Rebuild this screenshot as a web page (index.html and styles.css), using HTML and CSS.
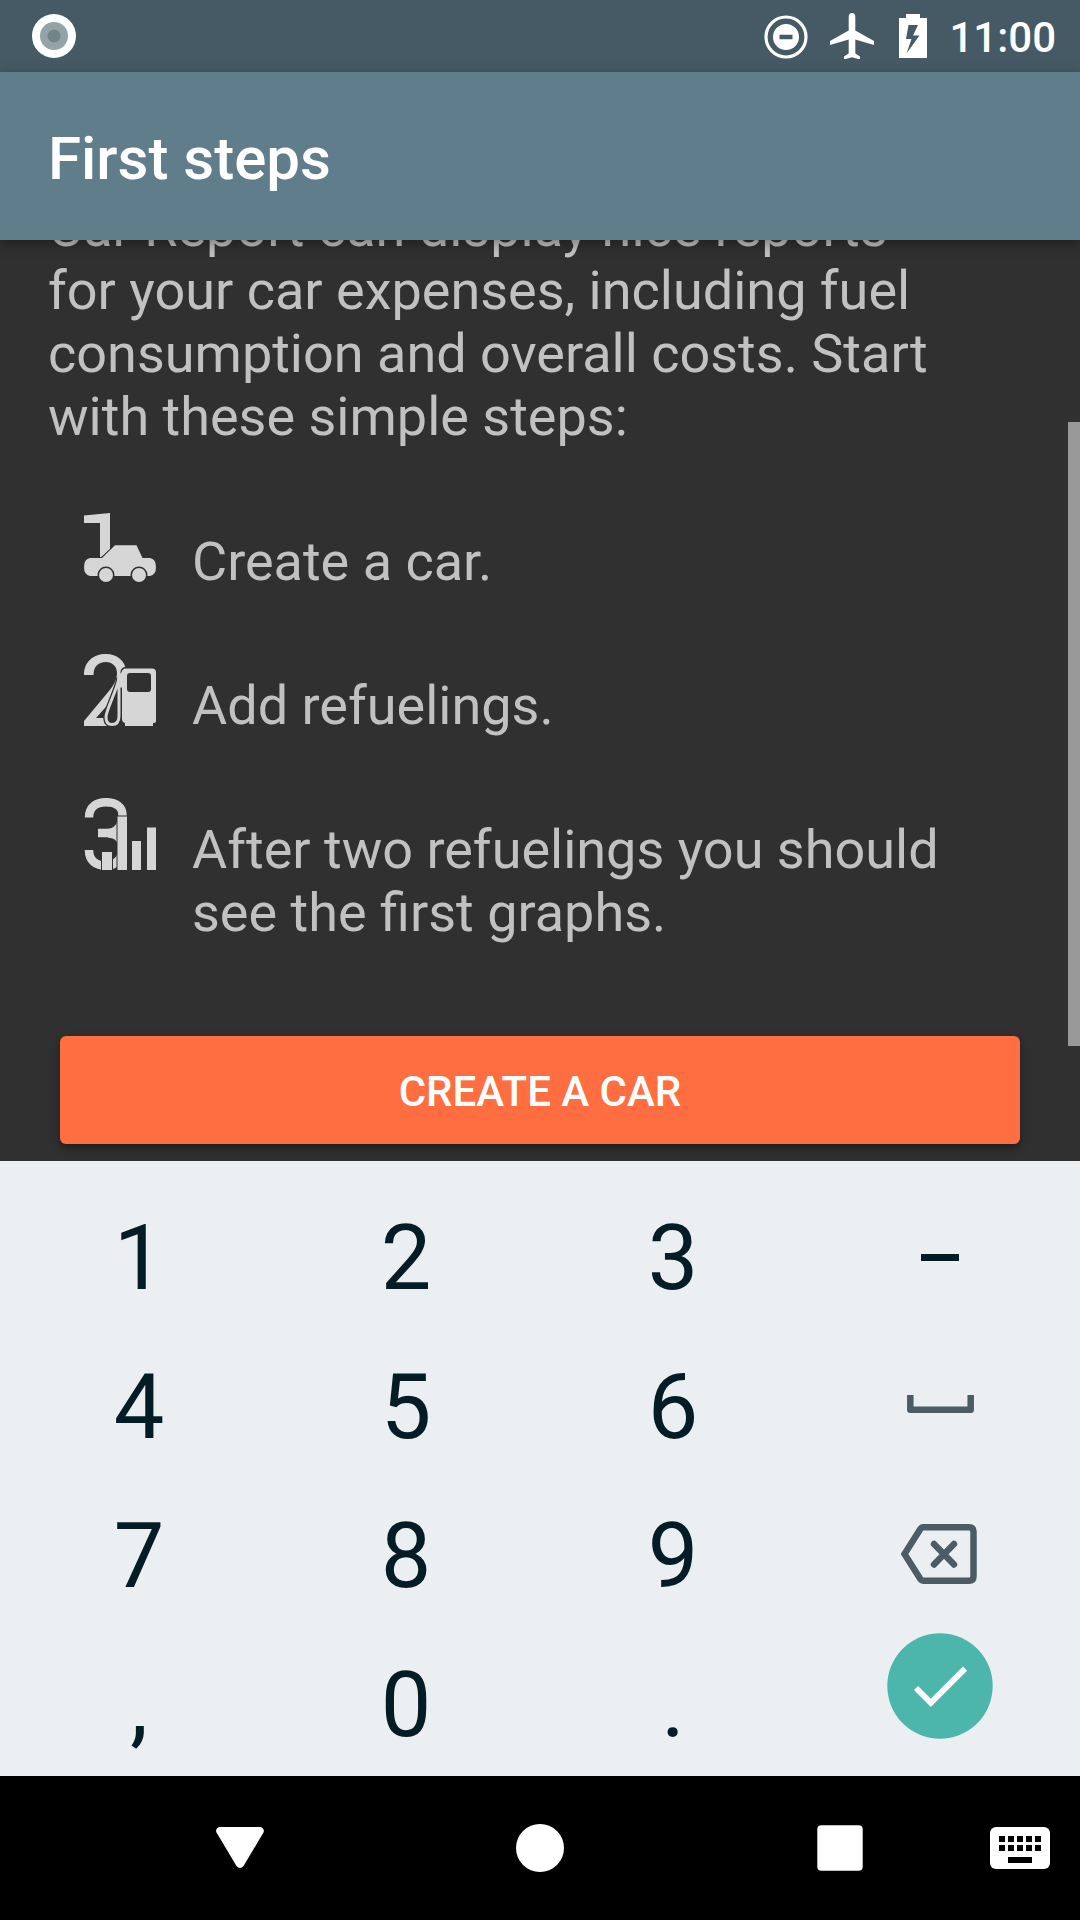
FILE: index.html
```html
<!DOCTYPE html>
<html lang="en">
<head>
<meta charset="utf-8">
<title>First steps</title>
<link rel="stylesheet" href="styles.css">
</head>
<body>
<div class="screen">
  <header class="status">
    <svg class="status-dot" viewBox="0 0 44 44"><circle cx="22" cy="22" r="22" fill="#fff"/><circle cx="22" cy="22" r="14" fill="#95a3a9"/><circle cx="22" cy="22" r="6.500" fill="#718489"/></svg>
    <div class="status-right">
      <svg class="icon-dnd" viewBox="0 0 44 44"><circle cx="22" cy="22" r="20" fill="none" stroke="#fff" stroke-width="3.200"/><path fill="#fff" fill-rule="evenodd" d="M22 9a13 13 0 1 0 0 26a13 13 0 1 0 0-26zM15.500 19.700h13v4.600h-13z"/></svg>
      <svg class="icon-plane" viewBox="0 0 44 46"><path fill="#fff" d="M22 0q3.300 0 3.300 4v13.500L44 28v4L25.300 26.500v14l4.700 3v3l-8-2.300-8 2.300v-3l4.700-3v-14L0 32v-4l18.700-10.500V4q0-4 3.300-4z"/></svg>
      <svg class="icon-battery" viewBox="0 0 28 44"><path fill="#fff" fill-rule="evenodd" d="M7 0h14v4h7v40H0V4h7zM9.500 11L7 25h5.500L7.500 39.500L20.500 21.500H14L19 11z"/></svg>
      <span class="clock">11:00</span>
    </div>
  </header>
  <div class="appbar"><h1>First steps</h1></div>
  <main class="content">
    <div class="scroll">
      <p class="intro">Car Report can display nice reports for your car expenses, including fuel consumption and overall costs. Start with these simple steps:</p>
      <ol class="steps">
        <li>
          <svg viewBox="0 0 72 72" fill="#d6d6d6"><path d="M0 5.500L26 3v37l-10 8V13H0z"/><path stroke="#303030" stroke-width="2" paint-order="stroke" d="M6 48h12L31 35.200h21.500L58.500 48H66q6 1 6 9t-6 9H6q-6-1-6-9t6-9z"/><g stroke="#303030" stroke-width="3" paint-order="stroke"><circle cx="22" cy="65" r="7"/><circle cx="55" cy="65" r="7"/></g></svg>
          <span>Create a car.</span>
        </li>
        <li>
          <svg viewBox="0 0 72 72" fill="#d6d6d6"><path d="M0 21C0 8 9 0 22 0c11 0 20 7 20 18 0 12-7 20-13 27L12 64h20v8H0v-5L25 37c5-6 8-12 8-18 0-7-5-11-11-11C14 8 9.500 13 9.500 21z"/><path stroke="#303030" stroke-width="3" paint-order="stroke" d="M42 14.500h26q4 0 4 4V67q0 2-3 2v3H41v-3q-3-1-3-4V18.500q0-4 4-4z"/><path fill="#303030" stroke="#303030" stroke-width="5.500" d="M35 24C33 36 22 56 22 63q0 7.500 6 7.500 7 0 7-8.500V33"/><path d="M33 24.500L39 16v17.500h-6z"/><path fill="none" stroke="#d6d6d6" stroke-width="3" d="M35 24C33 36 22 56 22 63q0 7.500 6 7.500 7 0 7-8.500V31"/><rect x="43" y="19" width="24" height="19" rx="3" fill="#303030"/></svg>
          <span>Add refuelings.</span>
        </li>
        <li>
          <svg viewBox="0 0 72 72"><path fill="none" stroke="#d6d6d6" stroke-width="8.500" d="M5 19.500C5 9 12 4.200 22 4.200S38.500 9 38.500 17c0 10-5 18-16 18H14M5 52C5 63 12 67.700 22 67.700S38.500 60 38.500 51 34 35.500 24 35.500"/><g fill="#d6d6d6" stroke="#303030" stroke-width="1"><path d="M17.500 53.500h11V73h-11zM33 18h10.500v55H33z"/></g><path fill="#d6d6d6" d="M48 43h9v29h-9zM63 29.500h9V72h-9z"/></svg>
          <span>After two refuelings you should see the first graphs.</span>
        </li>
      </ol>
      <button class="create">CREATE A CAR</button>
    </div>
    <div class="scrollbar"></div>
  </main>
  <section class="keyboard">
    <span>1</span><span>2</span><span>3</span><span class="minus"><i></i></span>
    <span>4</span><span>5</span><span>6</span><span><svg class="space" viewBox="0 0 67 18"><path fill="none" stroke="#4b5c64" stroke-width="6.500" stroke-linejoin="round" d="M3.300 0v14.700h60.400V0"/></svg></span>
    <span>7</span><span>8</span><span>9</span><span><svg class="backspace" viewBox="0 0 76 60"><g fill="none" stroke="#4b5c64" stroke-width="6.500"><path d="M22 3.300h46q4.500 0 4.500 4.500v44.400q0 4.500-4.500 4.500H22q-1.500 0-2.500-1.500L3.500 30 19.500 4.800q1-1.500 2.500-1.500z"/><path stroke-linecap="round" d="M33 20l20 20.500M53 20L33 40.500"/></g></svg></span>
    <span>,</span><span>0</span><span>.</span><span><svg class="enter" viewBox="0 0 106 106"><circle cx="53" cy="53" r="52.700" fill="#4db6ac"/><path fill="none" stroke="#fff" stroke-width="5.800" d="M29 55l14.800 14.800L78 35.600"/></svg></span>
  </section>
  <nav class="navbar">
    <svg viewBox="0 0 1080 144" fill="#fff"><path d="M219 51h42q4 2 2.500 5.500L243.500 90q-3.500 4-7 0L216.500 56.500Q215 52.500 219 51z"/><circle cx="540" cy="72" r="24"/><rect x="817.300" y="49.300" width="45.400" height="45.400" rx="4"/><rect x="990" y="51" width="60" height="42" rx="6"/><path fill="#000" d="M999 60h6v6h-6zM1008 60h6v6h-6zM1017 60h6v6h-6zM1026 60h6v6h-6zM1035 60h6v6h-6zM999 69h6v6h-6zM1008 69h6v6h-6zM1017 69h6v6h-6zM1026 69h6v6h-6zM1035 69h6v6h-6zM1008 81h24v6h-24z"/></svg>
  </nav>
</div>
</body>
</html>
```
FILE: styles.css
```css
* { box-sizing: border-box; }
body { margin: 0; font-family: Roboto, sans-serif; }
svg { display: block; flex: none; }
.screen { width: 1080px; height: 1920px; display: flex; flex-direction: column; overflow: hidden; background: #303030; }

.status { height: 72px; flex: none; background: #455a64; display: flex; justify-content: space-between; padding: 0 24px 0 32px; }
.status-dot { width: 44px; height: 44px; margin-top: 14px; }
.status-right { display: flex; align-items: flex-start; }
.icon-dnd { width: 44px; height: 44px; margin-top: 14.5px; }
.icon-plane { width: 44px; height: 46px; margin: 13px 0 0 22px; }
.icon-battery { width: 28px; height: 44px; margin: 14px 0 0 25px; }
.clock { font-size: 42px; line-height: 50px; font-weight: 500; color: #fff; margin: 13px 0 0 22px; }

.appbar { height: 168px; flex: none; background: #607d8b; padding: 0 48px; display: flex; align-items: center; position: relative; z-index: 1; box-shadow: 0 4px 12px rgba(0,0,0,.35); }
.appbar h1 { margin: 6px 0 0; font-size: 60px; line-height: 72px; font-weight: 500; color: #fff; }

.content { height: 921px; flex: none; display: flex; overflow: hidden; color: #c1c1c1; font-size: 54px; line-height: 63px; }
.scroll { width: 1068px; padding: 0 48px; }
.intro { margin: -44px 0 0; width: 900px; }
.steps { list-style: none; margin: 61px 0 0; padding: 0 0 0 36px; display: grid; gap: 18px; }
.steps li { display: flex; align-items: flex-start; gap: 36px; min-height: 126px; }
.steps svg { width: 72px; height: 72px; margin-top: 1px; }
.steps span { padding-top: 21px; }
.create { display: block; width: 960px; height: 108px; margin: 92px 0 0 12px; border: 0; border-radius: 6px; background: #ff6e40; color: #fff; font: 500 42px/48px Roboto, sans-serif; padding: 3px 0 0; box-shadow: 0 4px 9px rgba(0,0,0,.4); }
.scrollbar { width: 12px; height: 624px; margin-top: 182px; background: #999; }

.keyboard { height: 615px; flex: none; background: #ebeff2; padding: 23px 6.5px 0 5.5px; display: grid; grid-template-columns: repeat(4, 267px); grid-template-rows: repeat(4, 149px); color: #041c26; font-size: 90px; line-height: 106px; }
.keyboard span { display: flex; justify-content: center; align-items: center; }
.minus i { width: 38px; height: 7px; margin-bottom: 2px; background: #041c26; }
.space { width: 67px; height: 18px; margin-bottom: 7px; }
.backspace { width: 76px; height: 60px; margin: 0 2px 6px 0; }
.enter { width: 106px; height: 106px; margin-top: -40px; }

.navbar { height: 144px; flex: none; background: #000; }
.navbar svg { width: 1080px; height: 144px; }
```
